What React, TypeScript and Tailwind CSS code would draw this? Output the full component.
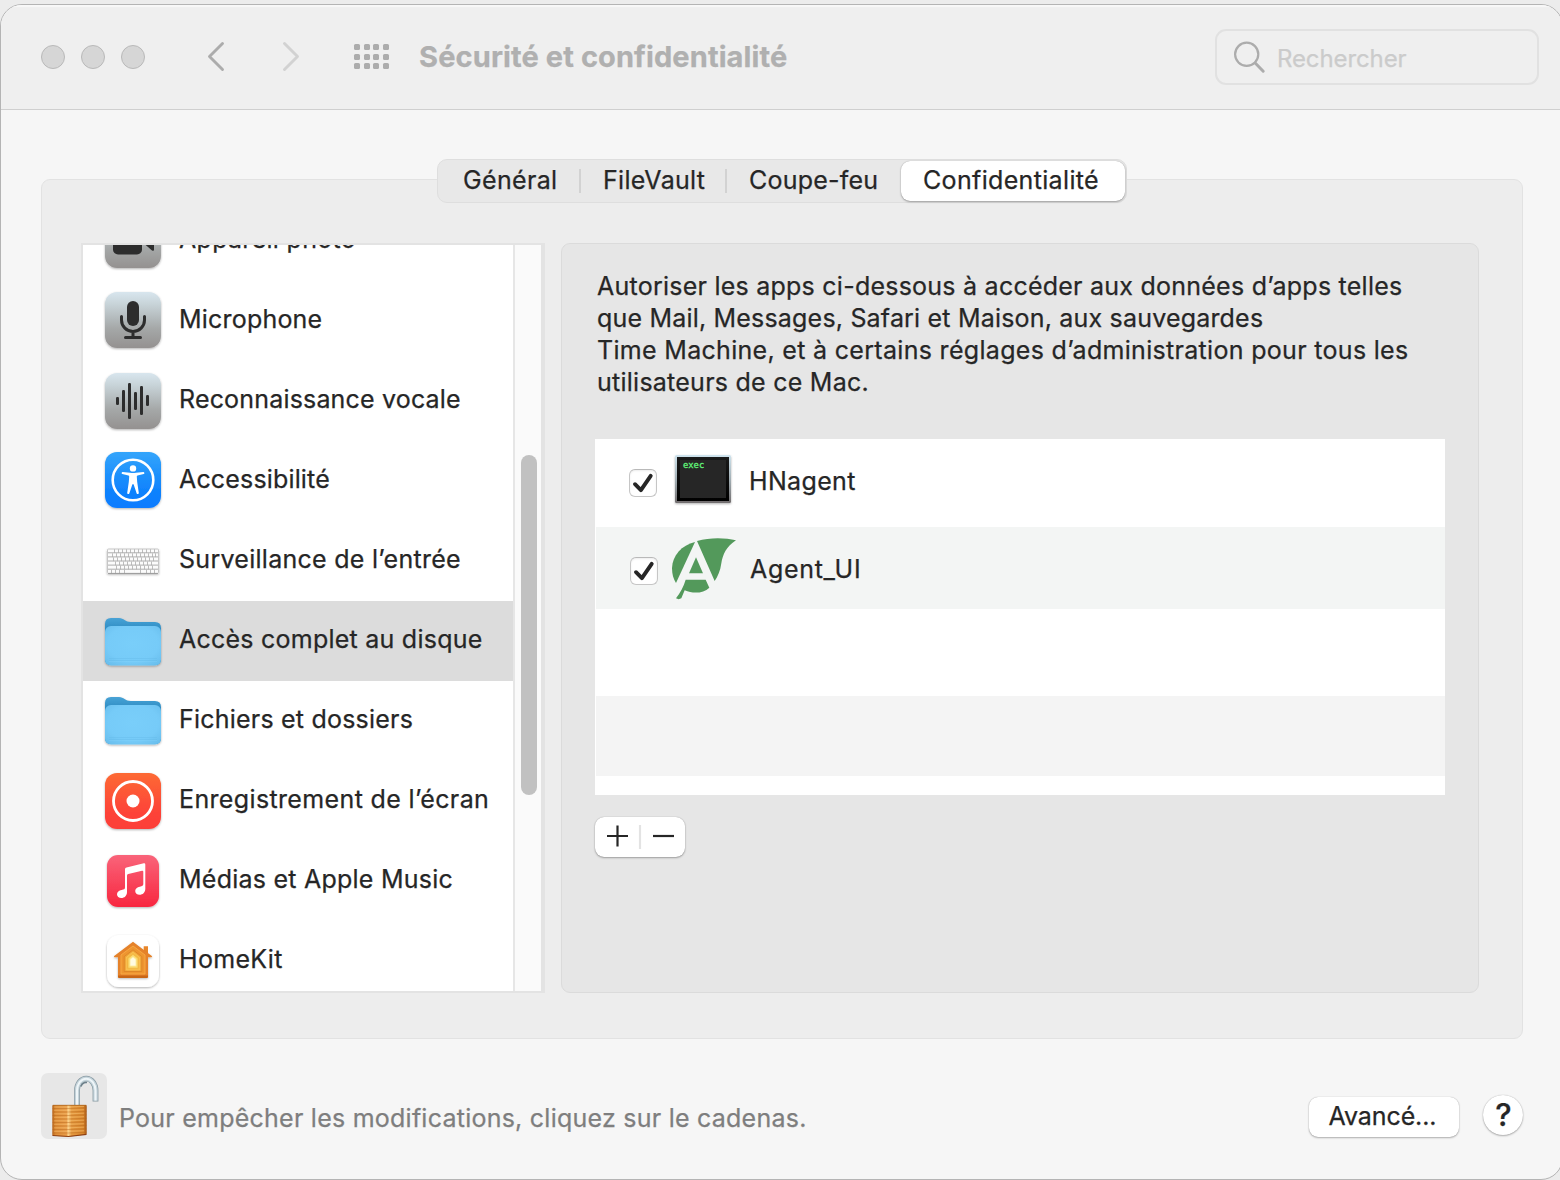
import type { ReactNode } from "react";

/* ---------- Sidebar icons, each on a 64×80 row canvas ---------- */

function RowIcon({ children }: { children: ReactNode }) {
  return (
    <svg width="64" height="80" viewBox="0 0 64 80" className="shrink-0 overflow-visible">
      {children}
    </svg>
  );
}

function Tile({ y, fill, x = 4, size = 56, r = 12 }: { y: number; fill: string; x?: number; size?: number; r?: number }) {
  return <rect x={x} y={y} width={size} height={size} rx={r} fill={fill} filter="url(#soft)" />;
}

function SharedDefs() {
  return (
    <svg width="0" height="0" className="absolute">
      <defs>
        <filter id="soft" x="-20%" y="-20%" width="140%" height="150%">
          <feDropShadow dx="0" dy="1" stdDeviation="1" floodColor="#000" floodOpacity="0.3" />
        </filter>
        <linearGradient id="steel" x1="0" y1="0" x2="0" y2="1">
          <stop offset="0" stopColor="#d8e6ee" />
          <stop offset="0.2" stopColor="#c9d5da" />
          <stop offset="0.65" stopColor="#a5a8a8" />
          <stop offset="1" stopColor="#949190" />
        </linearGradient>
        <linearGradient id="blue" x1="0" y1="0" x2="0" y2="1">
          <stop offset="0" stopColor="#34a5fb" />
          <stop offset="0.7" stopColor="#0f82fd" />
          <stop offset="1" stopColor="#0a7cff" />
        </linearGradient>
        <linearGradient id="orange" x1="0" y1="0" x2="0" y2="1">
          <stop offset="0" stopColor="#fd6a35" />
          <stop offset="0.7" stopColor="#fd4338" />
          <stop offset="1" stopColor="#fc3e39" />
        </linearGradient>
        <linearGradient id="pink" x1="0" y1="0" x2="0" y2="1">
          <stop offset="0" stopColor="#f9647a" />
          <stop offset="1" stopColor="#f8263f" />
        </linearGradient>
        <linearGradient id="folderBack" x1="0" y1="0" x2="0" y2="1">
          <stop offset="0" stopColor="#49a3d6" />
          <stop offset="0.25" stopColor="#2d8cc3" />
          <stop offset="1" stopColor="#2d8cc3" />
        </linearGradient>
        <radialGradient id="folderFront" cx="0.5" cy="0.45" r="0.75">
          <stop offset="0" stopColor="#79cefa" />
          <stop offset="0.6" stopColor="#76cbf8" />
          <stop offset="1" stopColor="#66bbea" />
        </radialGradient>
      </defs>
    </svg>
  );
}

function CameraIcon() {
  return (
    <RowIcon>
      <Tile y={11} fill="url(#steel)" />
      <rect x="12" y="27" width="29" height="26.5" rx="5" fill="#2d2d2d" />
      <path d="M43.5 43 51 49.400q2 1.200 2-.8V31.400q0-2-2-.9L43.500 36z" fill="#2d2d2d" />
    </RowIcon>
  );
}

function MicrophoneIcon() {
  return (
    <RowIcon>
      <Tile y={11} fill="url(#steel)" />
      <rect x="26" y="20" width="12" height="25" rx="6" fill="#2d2d2d" />
      <path d="M20.500 35.500v3.500a11.500 11.500 0 0 0 23 0v-3.500M32 51v5M24.500 56.500h15" fill="none" stroke="#2d2d2d" strokeWidth="3" strokeLinecap="round" />
    </RowIcon>
  );
}

function WaveIcon() {
  const bars = [
    [15, 36, 8],
    [21, 29, 22],
    [27, 22, 36],
    [33, 31, 18],
    [39, 25, 29],
    [45, 34, 11],
  ];
  return (
    <RowIcon>
      <Tile y={12} fill="url(#steel)" />
      {bars.map(([x, y, h]) => (
        <rect key={x} x={x} y={y} width="3" height={h} rx="1.2" fill="#2d2d2d" />
      ))}
    </RowIcon>
  );
}

function AccessibilityIcon() {
  return (
    <RowIcon>
      <Tile y={11} fill="url(#blue)" />
      <circle cx="32" cy="39" r="20.300" fill="none" stroke="#fff" strokeWidth="2.600" />
      <circle cx="32" cy="27.400" r="3.200" fill="#fff" />
      <path
        d="M21.600 31 29 31.800Q32 32.200 35 31.800L42.400 31a1.100 1.100 0 0 1 .3 2.100L36.500 34.400q-.8.2-.7 1.100l.4 5.500 1.600 10.900a1.100 1.100 0 0 1-2.100.5L32.600 43.200h-1.200L28.300 52.400a1.100 1.100 0 0 1-2.100-.5L27.800 41l.4-5.500q.1-.9-.7-1.100L21.300 33.100a1.100 1.100 0 0 1 .3-2.100Z"
        fill="#fff"
      />
    </RowIcon>
  );
}

function KeyboardIcon() {
  const keyRows = [
    [13, 17, 21, 25, 29, 33, 37, 41, 45, 49, 53],
    [11, 15, 19, 23, 27, 31, 35, 39, 43, 47, 51, 54],
    [12, 16, 20, 24, 28, 32, 36, 40, 44, 48, 52],
    [14, 18, 22, 26, 30, 34, 38, 42, 46, 50],
    [15, 19, 23, 27, 31, 35, 39, 43, 47, 51],
    [10, 14, 18, 23, 39, 45, 49, 53],
  ];
  return (
    <RowIcon>
      <g transform="translate(0 -0.8)">
        <rect x="6" y="28.500" width="52" height="25" rx="1.500" fill="#fbfbfb" filter="url(#soft)" />
        <rect x="6.500" y="28.800" width="51" height="24.500" rx="1" fill="none" stroke="#c0c0c0" strokeWidth="0.9" />
        {keyRows.map((xs, i) => (
          <g key={i} stroke="#adadad">
            {i > 0 && <path d={`M7 ${28.5 + i * 4.1}h50`} strokeWidth="1" />}
            {xs.map((x) => (
              <path key={x} d={`M${x + 0.5} ${29 + i * 4.1}v3.800`} strokeWidth="0.8" />
            ))}
          </g>
        ))}
        <path d="M7 53.200h50" stroke="#959595" strokeWidth="0.9" />
      </g>
    </RowIcon>
  );
}

function FolderIcon({ raised = false }: { raised?: boolean }) {
  return (
    <RowIcon>
      <g transform={raised ? "translate(0 -1)" : undefined}>
        <g filter="url(#soft)">
          <path d="M4 23q0-6 6-6h8c5 0 6 4 12 4h24q6 0 6 6v31q0 6-6 6H10q-6 0-6-6z" fill="url(#folderBack)" />
          <rect x="4" y="25" width="56" height="39.500" rx="6" fill="url(#folderFront)" />
        </g>
        <path d="M8 57.500h48M8 59.500h48" stroke="#62b8e8" strokeWidth="0.6" opacity="0.55" />
        <path d="M8 60.300h48" stroke="#8bd6fb" strokeWidth="0.6" opacity="0.5" />
      </g>
    </RowIcon>
  );
}

function RecordIcon() {
  return (
    <RowIcon>
      <Tile y={12} fill="url(#orange)" />
      <circle cx="32" cy="40" r="19.500" fill="none" stroke="#fff" strokeWidth="2.800" />
      <circle cx="32" cy="40" r="6.500" fill="#fff" />
    </RowIcon>
  );
}

function MusicIcon() {
  return (
    <RowIcon>
      <Tile x={6} y={14} size={52} r={11} fill="url(#pink)" />
      <path
        d="M24 28.200q0-1.500 1.500-1.800L42.800 22.300q1.500-.3 1.500 1.200V47.700c0 3.900-2.700 6-5.700 6-2.600 0-4.400-1.500-4.400-3.700 0-2.500 2-3.800 4.600-4.300 2.500-.4 3.500-.9 3.500-2.700V30.800q0-1.300-1.300-1L27.300 33q-1.300.3-1.300 1.600V51c0 3.900-2.700 6-5.600 6-2.600 0-4.400-1.500-4.400-3.700 0-2.500 2-3.800 4.600-4.300 2.500-.4 3.400-.9 3.400-2.700z"
        fill="#fff"
      />
    </RowIcon>
  );
}

function HomeIcon() {
  return (
    <RowIcon>
      <Tile x={6} y={14} size={52} r={12} fill="#fff" />
      <g strokeLinejoin="round">
        <path d="M42.700 25.300h4.300v8L42.700 30z" fill="#e8862a" />
        <path d="M32 20.800 13.200 35q-.7.900.3 1.300H17V55.500q0 1.300 1.300 1.300H45.700q1.300 0 1.300-1.300V36.300h3.500q1-.4.3-1.300z" fill="#e5822a" filter="url(#soft)" />
        <path d="M17 54.500h30v1.200q0 1.300-1.300 1.300H18.300q-1.300 0-1.300-1.300z" fill="#c96616" />
        <path d="M32 25 20 34V53h24V34z" fill="#ee9530" stroke="#f7ab45" strokeWidth="0.9" />
        <path d="M32 28.800 23.200 35.600V50.500h17.600V35.600z" fill="#f0a437" stroke="#d98126" strokeWidth="0.8" />
        <path d="M32 31 25.300 36.300V49h13.400V36.300z" fill="#f6bb45" stroke="#fbcb62" strokeWidth="0.6" />
        <path d="M32 33.300 27 37.300V47.200h10V37.300z" fill="#fbdb70" stroke="#eeb03c" strokeWidth="0.6" />
        <path d="M32 35.800 29 38.300V45h6v-6.700z" fill="#fffbe0" stroke="#fdea9a" strokeWidth="0.8" />
      </g>
    </RowIcon>
  );
}

/* ---------- Sidebar ---------- */

const categories: { label: string; icon: ReactNode; tracking: string; selected?: boolean }[] = [
  { label: "Appareil photo", icon: <CameraIcon />, tracking: "tracking-[0.3px]" },
  { label: "Microphone", icon: <MicrophoneIcon />, tracking: "tracking-[0.2px]" },
  { label: "Reconnaissance vocale", icon: <WaveIcon />, tracking: "tracking-[0.18px]" },
  { label: "Accessibilité", icon: <AccessibilityIcon />, tracking: "tracking-[0.16px]" },
  { label: "Surveillance de l’entrée", icon: <KeyboardIcon />, tracking: "tracking-[0.28px]" },
  { label: "Accès complet au disque", icon: <FolderIcon />, tracking: "tracking-[0.24px]", selected: true },
  { label: "Fichiers et dossiers", icon: <FolderIcon raised />, tracking: "tracking-[0.21px]" },
  { label: "Enregistrement de l’écran", icon: <RecordIcon />, tracking: "tracking-[0.36px]" },
  { label: "Médias et Apple Music", icon: <MusicIcon />, tracking: "tracking-[0.24px]" },
  { label: "HomeKit", icon: <HomeIcon />, tracking: "tracking-[0.32px]" },
];

function Sidebar() {
  return (
    <div className="flex h-[750px] w-[464px] border-2 border-r-4 border-[#e3e3e3] bg-white">
      <div className="h-[746px] w-[430px] overflow-hidden">
        <ul className="-mt-11">
          {categories.map((c) => (
            <li key={c.label} className={`flex h-20 items-center pl-[18px] ${c.selected ? "bg-[#dcdcdc]" : ""}`}>
              {c.icon}
              <span className={`ml-3.5 whitespace-nowrap pb-1 text-[25px] leading-8 ${c.tracking}`}>{c.label}</span>
            </li>
          ))}
        </ul>
      </div>
      <div className="flex w-7 justify-center border-l-2 border-[#e6e6e6] bg-[#fafafa] pl-0.5 pt-[210px]">
        <div className="h-[340px] w-4 rounded-full bg-[#c1c1c1]" />
      </div>
    </div>
  );
}

/* ---------- Right panel ---------- */

function Checkbox() {
  return (
    <span className="flex size-7 shrink-0 items-center justify-center rounded-[6px] border border-[#c6c6c6] border-t-[#b9b9b9] bg-white shadow-[inset_0_1px_2px_rgba(0,0,0,0.08)]">
      <svg width="28" height="28" viewBox="0 0 28 28" className="shrink-0">
        <path d="M6 15.200 11.900 21.200 21.700 6.900" fill="none" stroke="#262626" strokeWidth="3.900" strokeLinecap="round" strokeLinejoin="round" />
      </svg>
    </span>
  );
}

function ExecIcon() {
  return (
    <svg width="56" height="49" viewBox="0 0 56 49" className="shrink-0 overflow-visible">
      <defs>
        <linearGradient id="bezel" x1="0" y1="0" x2="0" y2="1">
          <stop offset="0" stopColor="#cfe4ee" />
          <stop offset="0.5" stopColor="#a3b0b6" />
          <stop offset="1" stopColor="#716d6e" />
        </linearGradient>
        <linearGradient id="screen" x1="0" y1="0" x2="0" y2="1">
          <stop offset="0" stopColor="#1a1a1a" />
          <stop offset="1" stopColor="#000" />
        </linearGradient>
      </defs>
      <rect width="56" height="48" rx="1.500" fill="url(#bezel)" filter="url(#soft)" />
      <rect x="2" y="2" width="52" height="44" fill="url(#screen)" />
      <rect x="5" y="5" width="46" height="38" fill="#262626" />
      <text x="8" y="12.700" fill="#62f57a" stroke="#62f57a" strokeWidth="0.3" fontSize="8.800" fontFamily="DejaVu Sans Mono, monospace">
        exec
      </text>
    </svg>
  );
}

function LeafLogo() {
  return (
    <svg width="68" height="66" viewBox="255 318 204 198" fill="#53995b" className="shrink-0">
      <path d="M330 336C290 346 262 376 261 415C261 434 266 449 273 459Z" />
      <path d="M336 333C375 322 420 323 453 331C424 350 413 374 409 400C406 423 398 440 389 453Z" />
      <path d="M333 382 354 430H312Z" />
      <path d="M302 449H362L373 473C355 490 325 492 299 481L289 505Q281 510 273 505C286 488 296 470 302 449Z" />
    </svg>
  );
}

function AppTable() {
  return (
    <div className="h-[356px] w-[850px] bg-white">
      <div className="flex h-[88px] items-center pl-[34px]">
        <Checkbox />
        <span className="mb-2 ml-[18px]">
          <ExecIcon />
        </span>
        <span className="ml-[18px] pb-1 text-[25px] leading-8 tracking-[0.35px]">HNagent</span>
      </div>
      <div className="ml-px flex h-[82px] items-center bg-[#f3f5f4] pl-[34px]">
        <span className="mt-1.5">
          <Checkbox />
        </span>
        <span className="ml-[11.500px] mt-0.5">
          <LeafLogo />
        </span>
        <span className="ml-[12.500px] mt-0.5 text-[25px] leading-8 tracking-[0.68px]">Agent_UI</span>
      </div>
      <div className="ml-px mt-[87px] h-20 bg-[#f4f4f4]" />
    </div>
  );
}

function DetailPanel() {
  return (
    <div className="h-[750px] w-[918px] rounded-[9px] border border-[#dbdbdb] bg-[#e6e6e6] pl-[33px] pt-[26px]">
      <p className="ml-0.5 whitespace-nowrap text-[25px] leading-8">
        <span className="block tracking-[0.24px]">Autoriser les apps ci-dessous à accéder aux données d’apps telles</span>
        <span className="block tracking-[0.19px]">que Mail, Messages, Safari et Maison, aux sauvegardes</span>
        <span className="block tracking-[0.31px]">Time Machine, et à certains réglages d’administration pour tous les</span>
        <span className="block tracking-[0.25px]">utilisateurs de ce Mac.</span>
      </p>
      <div className="mt-[41px]">
        <AppTable />
      </div>
      <div className="mt-[22px] flex h-10 w-[90px] items-center rounded-[9px] bg-white shadow-[0_1px_2px_rgba(0,0,0,0.3),0_0_1px_rgba(0,0,0,0.3)]">
        <svg width="90" height="40" viewBox="0 0 90 40" fill="none" strokeWidth="2.200">
          <path d="M12 19h21M22.500 8.500v21" stroke="#262626" />
          <path d="M45 8v24" stroke="#e3e3e3" />
          <path d="M58 19h21" stroke="#262626" />
        </svg>
      </div>
    </div>
  );
}

/* ---------- Window chrome ---------- */

function TitleBar() {
  return (
    <header className="flex h-[105px] items-center border-b border-[#cfcfcf] bg-[#efefef] pl-10 shadow-[inset_0_2px_1px_#f8f8f8]">
      <div className="flex gap-4">
        <span className="size-6 rounded-full border border-[#b9b9b9] bg-[#d6d6d6]" />
        <span className="size-6 rounded-full border border-[#b9b9b9] bg-[#d6d6d6]" />
        <span className="size-6 rounded-full border border-[#b9b9b9] bg-[#d6d6d6]" />
      </div>
      <svg width="96" height="32" viewBox="0 0 96 32" className="mb-[3px] ml-[60px]" fill="none" strokeWidth="2.900" strokeLinecap="round" strokeLinejoin="round">
        <path d="M17.500 3.500 4.500 16.500 17.500 29.500" stroke="#acacac" />
        <path d="M79.500 3.500 92.500 16.500 79.500 29.500" stroke="#d2d2d2" />
      </svg>
      <div className="mb-px ml-[53px] grid grid-cols-4 gap-x-[3.700px] gap-y-[3.700px]">
        {Array.from({ length: 12 }, (_, i) => (
          <span key={i} className="size-1.5 rounded-[1.5px] bg-[#acacac]" />
        ))}
      </div>
      <h1 className="ml-[30px] whitespace-nowrap text-[29px] font-bold leading-9 tracking-[0.11px] text-[#b0b0b0]">
        Sécurité et confidentialité
      </h1>
      <div className="ml-auto mr-[23px] flex h-14 w-[324px] items-center rounded-[11px] border-2 border-[#e1e1e1]">
        <svg width="36" height="36" viewBox="0 0 36 36" className="ml-[15px]" fill="none" stroke="#acacac" strokeLinecap="round">
          <circle cx="14.700" cy="15.300" r="11.600" strokeWidth="2.200" />
          <path d="M23.200 24 31.200 32.200" strokeWidth="3" />
        </svg>
        <span className="ml-[9px] mt-1 text-2xl tracking-[-0.11px] text-[#cbcbcb]">Rechercher</span>
      </div>
    </header>
  );
}

function Tabs() {
  return (
    <nav className="relative z-10 ml-[436px] flex h-11 w-[690px] items-center whitespace-nowrap rounded-[10px] border border-[#dedede] bg-[#e8e8e8] text-[25px] leading-8">
      <span className="-mt-0.5 ml-[25px] w-[116px] tracking-[0.35px]">Général</span>
      <span className="h-6 w-0.5 bg-[#d2d2d2]" />
      <span className="-mt-0.5 ml-[22px] w-[122px] tracking-[0.3px]">FileVault</span>
      <span className="h-6 w-0.5 bg-[#d2d2d2]" />
      <span className="-mt-0.5 ml-[22px] w-[152px] tracking-[0.22px]">Coupe-feu</span>
      <span className="flex h-10 w-[224px] items-center rounded-[9px] bg-white pb-0.5 pl-[22px] tracking-[0.34px] shadow-[0_1px_2px_rgba(0,0,0,0.3),0_0_1px_rgba(0,0,0,0.3)]">
        Confidentialité
      </span>
    </nav>
  );
}

function PadlockIcon() {
  return (
    <svg width="66" height="66" viewBox="0 0 66 66">
      <defs>
        <linearGradient id="brass" x1="0" y1="0" x2="1" y2="0">
          <stop offset="0" stopColor="#b8651b" />
          <stop offset="0.1" stopColor="#de8d36" />
          <stop offset="0.42" stopColor="#e99d49" />
          <stop offset="0.46" stopColor="#fcd690" />
          <stop offset="0.56" stopColor="#e59a40" />
          <stop offset="0.9" stopColor="#da882d" />
          <stop offset="1" stopColor="#a55514" />
        </linearGradient>
      </defs>
      <path d="M36 33V17.500a9 11.500 0 0 1 18.500 0V28.500" fill="none" stroke="#8799a2" strokeWidth="5.800" />
      <path d="M36 33V17.500a9 11.500 0 0 1 18.500 0V27.800" fill="none" stroke="#c3d2d9" strokeWidth="4.400" />
      <path d="M36 33V17.500a9 11.500 0 0 1 18.500 0V27.500" fill="none" stroke="#eef5f8" strokeWidth="2" />
      <path d="M40 13.500a5.500 6 0 0 1 6-4" fill="none" stroke="#6d808a" strokeWidth="1.500" />
      <path d="M11.300 33q0-1 1-1H44.700q1 0 1 1V60.500q0 .9-1 1.100L27.500 63.700 12.300 62.800q-1 0-1-1z" fill="url(#brass)" />
      <g fill="none" stroke="#b3641c" strokeWidth="1.100" opacity="0.4">
        {[35.5, 39, 42.5, 46, 49.5, 53, 56.5, 60].map((y) => (
          <path key={y} d={`M11.500 ${y}H27.500L45.500 ${y - 0.6}`} />
        ))}
      </g>
      <g fill="none" stroke="#ffd28a" strokeWidth="0.9" opacity="0.4">
        {[34, 37.3, 40.8, 44.3, 47.8, 51.3, 54.8, 58.3].map((y) => (
          <path key={y} d={`M13 ${y}H27.500L43 ${y - 0.6}`} />
        ))}
      </g>
      <path d="M11.500 62.500 27.500 63.500 45.500 61.300" fill="none" stroke="#8d3f12" strokeWidth="1.200" />
      <path d="M11.800 32.300H45.300" stroke="#a9661f" strokeWidth="0.8" />
    </svg>
  );
}

function Footer() {
  return (
    <footer className="ml-10 mr-[39px] mt-[34px] flex h-[66px] items-start">
      <div className="size-[66px] rounded-[7px] bg-[#e7e7e7]">
        <PadlockIcon />
      </div>
      <p className="ml-3 mt-[29px] whitespace-nowrap text-[25px] leading-8 tracking-[0.24px] text-[#7e7e7e]">
        Pour empêcher les modifications, cliquez sur le cadenas.
      </p>
      <button className="ml-auto mt-6 h-10 w-[150px] rounded-[9px] bg-white pb-0.5 pr-[3px] text-[25px] leading-8 tracking-[-0.1px] shadow-[0_1px_2px_rgba(0,0,0,0.28),0_0_1px_rgba(0,0,0,0.3)]">
        Avancé...
      </button>
      <button className="ml-6 mt-[22px] flex size-10 items-center justify-center rounded-full bg-white shadow-[0_1px_2px_rgba(0,0,0,0.28),0_0_1px_rgba(0,0,0,0.3)]">
        <span className="pl-px text-[31px] font-medium leading-10">?</span>
      </button>
    </footer>
  );
}

export default function App() {
  return (
    <div className="h-[1180px] w-[1560px] overflow-hidden bg-[#ececec] pt-1 font-['Inter','Liberation_Sans',sans-serif] text-[#262626] [-webkit-text-stroke:0.25px]">
      <SharedDefs />
      <div className="h-[1176px] w-[1563px] overflow-hidden rounded-[22px] border border-[#b4b4b4] bg-[#f6f6f6]">
        <TitleBar />
        <main className="pt-[49px]">
          <Tabs />
          <section className="-mt-6 ml-10 flex h-[860px] w-[1482px] gap-4 rounded-[9px] border border-[#e2e2e2] bg-[#ededed] pl-[39px] pt-[63px]">
            <Sidebar />
            <DetailPanel />
          </section>
        </main>
        <Footer />
      </div>
    </div>
  );
}
